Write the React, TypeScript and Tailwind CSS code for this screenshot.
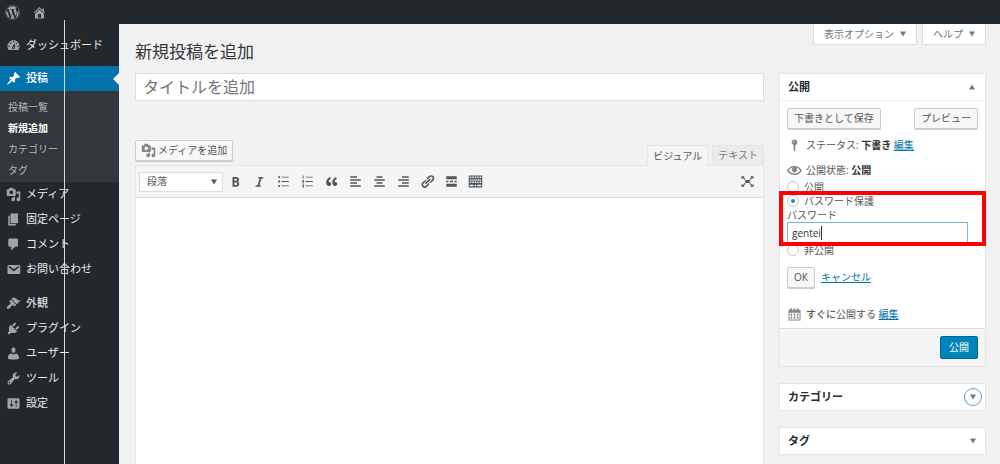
import { ReactNode } from 'react';
import { FaWordpress } from 'react-icons/fa';

const icons = {
  home: 'M16 8.5l1.53 1.53-1.06 1.06L10 4.6l-6.47 6.49-1.06-1.06L10 2.5l4 4v-2h2v4zm-6-2.46l6 5.99V18H4v-5.97zM12 17v-5H8v5h4z',
  dashboard:
    'M3.76 16h12.48c1.1-1.37 1.76-3.11 1.76-5 0-4.42-3.58-8-8-8s-8 3.58-8 8c0 1.89.66 3.63 1.76 5zM10 4c.55 0 1 .45 1 1s-.45 1-1 1-1-.45-1-1 .45-1 1-1zM6 6c.55 0 1 .45 1 1s-.45 1-1 1-1-.45-1-1 .45-1 1-1zm8 0c.55 0 1 .45 1 1s-.45 1-1 1-1-.45-1-1 .45-1 1-1zm-5.37 5.55L12 7v6c0 1.1-.9 2-2 2s-2-.9-2-2c0-.57.24-1.08.63-1.45zM4 10c.55 0 1 .45 1 1s-.45 1-1 1-1-.45-1-1 .45-1 1-1zm12 0c.55 0 1 .45 1 1s-.45 1-1 1-1-.45-1-1 .45-1 1-1zm-5 3c0-.55-.45-1-1-1s-1 .45-1 1 .45 1 1 1 1-.45 1-1z',
  post: 'M10.44 3.02l1.82-1.82 6.36 6.35-1.83 1.82c-1.05-.68-2.48-.57-3.41.36l-.75.75c-.92.93-1.04 2.35-.35 3.41l-1.83 1.82-2.41-2.41-2.8 2.79c-.42.42-3.38 2.71-3.8 2.29s1.86-3.39 2.28-3.81l2.79-2.79L4.1 9.36l1.83-1.82c1.05.69 2.48.57 3.4-.36l.75-.75c.93-.92 1.05-2.35.36-3.41z',
  media:
    'M13 11V4c0-.55-.45-1-1-1h-1.67L9 1H5L3.67 3H2c-.55 0-1 .45-1 1v7c0 .55.45 1 1 1h10c.55 0 1-.45 1-1zM7 4.5c1.38 0 2.5 1.12 2.5 2.5S8.38 9.5 7 9.5 4.5 8.38 4.5 7 5.62 4.5 7 4.5zM14 6h5v10.5c0 1.38-1.12 2.5-2.5 2.5S14 17.88 14 16.5s1.12-2.5 2.5-2.5c.17 0 .34.02.5.05V9h-3V6zm-4 8.05V13h2v3.5c0 1.38-1.12 2.5-2.5 2.5S7 17.88 7 16.5 8.12 14 9.5 14c.17 0 .34.02.5.05z',
  page: 'M6 15V2h10v13H6zm-1 1h8v2H3V5h2v11z',
  comments: 'M5 2h9c1.1 0 2 .9 2 2v7c0 1.1-.9 2-2 2h-2l-5 5v-5H5c-1.1 0-2-.9-2-2V4c0-1.1.9-2 2-2z',
  email:
    'M3.87 4h13.25C18.37 4 19 4.59 19 5.79v8.42c0 1.19-.63 1.79-1.88 1.79H3.87c-1.25 0-1.88-.6-1.88-1.79V5.79c0-1.2.63-1.79 1.88-1.79zm6.62 8.6l6.74-5.53c.24-.2.43-.66.13-1.07-.29-.41-.82-.42-1.17-.17l-5.7 3.86L4.8 5.83c-.35-.25-.88-.24-1.17.17-.3.41-.11.87.13 1.07z',
  appearance:
    'M14.48 11.06L7.41 3.99l1.5-1.5c.5-.56 2.3-.47 3.51.32 1.21.8 1.43 1.28 2.91 2.1 1.18.64 2.45 1.26 4.45.85zm-.71.71L6.7 4.7 4.93 6.47c-.39.39-.39 1.02 0 1.41l1.06 1.06c.39.39.39 1.03 0 1.42-.6.6-1.43 1.11-2.21 1.69-.35.26-.7.53-1.01.84C1.43 14.23.4 16.08 1.4 17.07c.99 1 2.84-.03 4.18-1.36.31-.31.58-.66.85-1.02.57-.78 1.08-1.61 1.69-2.21.39-.39 1.02-.39 1.41 0l1.06 1.06c.39.39 1.02.39 1.41 0z',
  plugins:
    'M13.11 4.36L9.87 7.6 8 5.73l3.24-3.24c.35-.34 1.05-.2 1.56.32.52.51.66 1.21.31 1.55zm-8 1.77l.91-1.12 9.01 9.01-1.19.84c-.71.71-2.63 1.16-3.82 1.16H6.14L4.9 17.26c-.59.59-1.54.59-2.12 0-.59-.58-.59-1.53 0-2.12l1.24-1.24v-3.88c0-1.13.4-3.19 1.09-3.89zm7.26 3.97l3.24-3.24c.34-.35 1.04-.21 1.55.31.52.51.66 1.21.31 1.55l-3.24 3.25z',
  users:
    'M10 9.25c-2.27 0-2.73-3.44-2.73-3.44C7 4.02 7.82 2 9.97 2c2.16 0 2.98 2.02 2.71 3.81 0 0-.41 3.44-2.68 3.44zm0 2.57L12.72 10c2.39 0 4.52 2.33 4.52 4.53v2.49s-3.65 1.13-7.24 1.13c-3.65 0-7.24-1.13-7.24-1.13v-2.49c0-2.25 1.94-4.48 4.47-4.48z',
  tools:
    'M16.68 9.77c-1.34 1.34-3.3 1.67-4.95.99l-5.41 6.52c-.99.99-2.59.99-3.58 0s-.99-2.59 0-3.57l6.52-5.42c-.68-1.65-.35-3.61.99-4.95 1.28-1.28 3.12-1.62 4.72-1.06l-2.89 2.89 2.82 2.82 2.86-2.87c.53 1.58.18 3.39-1.08 4.65zM3.81 16.21c.4.39 1.04.39 1.43 0 .4-.4.4-1.04 0-1.43-.39-.4-1.03-.4-1.43 0-.39.39-.39 1.03 0 1.43z',
  settings:
    'M18 16V4c0-.55-.45-1-1-1H3c-.55 0-1 .45-1 1v12c0 .55.45 1 1 1h14c.55 0 1-.45 1-1zM8 11h1c.55 0 1 .45 1 1s-.45 1-1 1H8v1.5c0 .28-.22.5-.5.5s-.5-.22-.5-.5V13H6c-.55 0-1-.45-1-1s.45-1 1-1h1V5.5c0-.28.22-.5.5-.5s.5.22.5.5V11zm5-2h-1c-.55 0-1-.45-1-1s.45-1 1-1h1V5.5c0-.28.22-.5.5-.5s.5.22.5.5V7h1c.55 0 1 .45 1 1s-.45 1-1 1h-1v5.5c0 .28-.22.5-.5.5s-.5-.22-.5-.5V9z',
  bold: 'M6 4v13h4.54c1.37 0 2.46-.33 3.26-1 .8-.66 1.2-1.58 1.2-2.77 0-.84-.17-1.51-.51-2.01s-.9-.85-1.67-1.03v-.09c.57-.1 1.02-.4 1.36-.9s.51-1.13.51-1.91c0-1.14-.39-1.98-1.17-2.5C12.75 4.26 11.5 4 9.78 4H6zm2.57 5.15V6.26h1.36c.73 0 1.27.11 1.61.32.34.22.51.58.51 1.07 0 .54-.16.92-.47 1.15s-.82.35-1.51.35h-1.5zm0 2.19h1.6c1.44 0 2.16.53 2.16 1.61 0 .6-.17 1.05-.51 1.34s-.86.43-1.57.43H8.57v-3.38z',
  italic: 'M14.78 6h-2.13l-2.8 9h2.12l-.62 2H4.6l.62-2h2.14l2.8-9H8.03l.62-2h6.75z',
  ul: 'M3 3h2.4v2.4H3zM3 8.8h2.4v2.4H3zM3 14.6h2.4V17H3zM7.5 3.6H17v1.2H7.5zM7.5 9.4H17v1.2H7.5zM7.5 15.2H17v1.2H7.5z',
  ol: 'M3.6 2h1.2v4H3.6zM2.8 8h2.6v1.8L4 11.4h1.4v.9H2.8v-1.2l1.5-1.7v-.5H2.8zM2.8 14h2.6v4H2.8v-.9h1.5v-.7h-1v-.8h1v-.7H2.8zM7.5 3.6H17v1.2H7.5zM7.5 9.4H17v1.2H7.5zM7.5 15.2H17v1.2H7.5z',
  quote:
    'M9.49 13.22c0-.74-.2-1.38-.61-1.9-.62-.78-1.83-.88-2.53-.72-.29-1.65 1.11-3.75 2.92-4.65L7.88 4c-2.73 1.3-5.42 4.28-4.96 8.05C3.21 14.43 4.59 16 6.54 16c.85 0 1.56-.25 2.12-.75s.83-1.18.83-2.03zm8.05 0c0-.74-.2-1.38-.61-1.9-.63-.78-1.83-.88-2.53-.72-.29-1.65 1.11-3.75 2.92-4.65L15.93 4c-2.73 1.3-5.41 4.28-4.95 8.05.29 2.38 1.66 3.95 3.61 3.95.85 0 1.56-.25 2.12-.75s.83-1.18.83-2.03z',
  alignLeft: 'M12 5V3H3v2h9zm5 4V7H3v2h14zm-5 4v-2H3v2h9zm5 4v-2H3v2h14z',
  alignCenter: 'M14 5V3H6v2h8zm3 4V7H3v2h14zm-3 4v-2H6v2h8zm3 4v-2H3v2h14z',
  alignRight: 'M17 5V3H8v2h9zm0 4V7H3v2h14zm0 4v-2H8v2h9zm0 4v-2H3v2h14z',
  link: 'M17.74 2.76c1.68 1.69 1.68 4.41 0 6.1l-1.53 1.52c-1.12 1.12-2.7 1.47-4.14 1.09l2.62-2.61.76-.77.76-.76c.84-.84.84-2.2 0-3.04-.84-.85-2.2-.85-3.04 0l-.77.76-3.38 3.38c-.37-1.44-.02-3.02 1.1-4.14l1.52-1.53c1.69-1.68 4.42-1.68 6.1 0zM8.59 13.43l5.34-5.34c.42-.42.42-1.1 0-1.52-.44-.43-1.13-.39-1.53 0l-5.33 5.34c-.42.42-.42 1.1 0 1.52.44.43 1.13.39 1.52 0zm-.76 2.29l4.14-4.15c.38 1.44.03 3.02-1.09 4.14l-1.52 1.53c-1.69 1.68-4.41 1.68-6.1 0-1.68-1.68-1.68-4.42 0-6.1l1.53-1.52c1.12-1.12 2.7-1.47 4.14-1.1l-4.14 4.15c-.85.84-.85 2.2 0 3.05.84.84 2.2.84 3.04 0z',
  more: 'M17 7V3H3v4h14zM6 11V9H3v2h3zm6 0V9H8v2h4zm5 0V9h-3v2h3zm0 6v-4H3v4h14z',
  kitchenSink:
    'M1 2h18v16H1zM2.4 3.4v2h2v-2zm3.3 0v2h2v-2zm3.3 0v2h2v-2zm3.3 0v2h2v-2zm3.3 0v2h2v-2zM2.4 7.4v1.2h15.2V7.4zM2.4 10v2h2v-2zm3.3 0v2h2v-2zm3.3 0v2h2v-2zm3.3 0v2h2v-2zm3.3 0v2h2v-2zM2.4 14.2v2h5v-2zm6.6 0v2h2v-2zm3.3 0v2h5.3v-2z',
  fullscreen:
    'M7 8h6v4H7zM2 3h4.2L4.9 4.3l2.6 2.6-1.1 1.1-2.6-2.6L2 7zM18 3v4l-1.8-1.6L13.6 8l-1.1-1.1 2.6-2.6L13.8 3zM2 17v-4l1.8 1.6L6.4 12l1.1 1.1-2.6 2.6L6.2 17zM18 17h-4.2l1.3-1.3-2.6-2.6 1.1-1.1 2.6 2.6L18 13z',
  pin: 'M10 2c2.1 0 3.8 1.7 3.8 3.8 0 1.6-1 3-2.4 3.5L10.800 17.500H9.200L8.600 9.300C7.200 8.800 6.200 7.400 6.200 5.800 6.200 3.700 7.900 2 10 2zM9.200 3.800c-.8.3-1.400 1-1.400 1.900h1c0-.6.4-1.100 1-1.300z',
  eye: 'M19.7 9.4C17.7 6 14 3.9 10 3.9S2.3 6 .3 9.4L0 10l.3.6c2 3.4 5.7 5.5 9.7 5.5s7.7-2.1 9.7-5.5l.3-.6-.3-.6zM10 14.1c-3.1 0-6-1.6-7.7-4.1C3.6 8 5.700 6.600 8 6.100c-.9.6-1.500 1.700-1.500 2.900 0 1.900 1.600 3.500 3.500 3.500s3.500-1.600 3.500-3.500c0-1.200-.6-2.300-1.500-2.900 2.300.5 4.400 1.900 5.700 3.900-1.700 2.500-4.600 4.100-7.700 4.100z',
  calendar:
    'M2 3.5h2.500v-2h2v2h2.500v-2h2v2h2.500v-2h2v2H18V18H2zM3.300 7.500v9.200h13.400V7.500zM4.800 8.500h2v3.200h-2zM9 8.500h2v3.200H9zM13.200 8.500h2v3.200h-2zM4.800 12.500h2v3.200h-2zM9 12.500h2v3.200H9zM13.200 12.500h2v3.200h-2z',
};

type IconName = keyof typeof icons;

const Icon = ({ name }: { name: IconName }) => (
  <svg viewBox="0 0 20 20" fill="currentColor" fillRule="evenodd" aria-hidden="true" className="size-[15px] shrink-0">
    <path d={icons[name]} />
  </svg>
);

const Triangle = ({ up = false }: { up?: boolean }) => (
  <svg viewBox="0 0 6 6" fill="currentColor" aria-hidden="true" className="size-1.5 shrink-0">
    <path d={up ? 'M0 5.5L3 .5l3 5z' : 'M0 .5l3 5 3-5z'} />
  </svg>
);

const mainMenu: { icon: IconName; label: string }[] = [
  { icon: 'media', label: 'メディア' },
  { icon: 'page', label: '固定ページ' },
  { icon: 'comments', label: 'コメント' },
  { icon: 'email', label: 'お問い合わせ' },
];

const adminMenu: { icon: IconName; label: string }[] = [
  { icon: 'appearance', label: '外観' },
  { icon: 'plugins', label: 'プラグイン' },
  { icon: 'users', label: 'ユーザー' },
  { icon: 'tools', label: 'ツール' },
  { icon: 'settings', label: '設定' },
];

const postMenu = ['投稿一覧', '新規追加', 'カテゴリー', 'タグ'];

const toolbar: { icon: IconName; label: string }[] = [
  { icon: 'bold', label: '太字' },
  { icon: 'italic', label: 'イタリック' },
  { icon: 'ul', label: '番号なしリスト' },
  { icon: 'ol', label: '番号付きリスト' },
  { icon: 'quote', label: '引用' },
  { icon: 'alignLeft', label: '左寄せ' },
  { icon: 'alignCenter', label: '中央揃え' },
  { icon: 'alignRight', label: '右寄せ' },
  { icon: 'link', label: 'リンクの挿入' },
  { icon: 'more', label: '続きを読む' },
  { icon: 'kitchenSink', label: 'ツールバー切り替え' },
];

const MenuItem = ({ icon, label }: { icon: IconName; label: string }) => (
  <a href="#" className="flex h-[25px] items-center gap-[5px] pl-1.5 text-[11px] text-[#eeeeee]">
    <span className="text-[#a0a5aa]">
      <Icon name={icon} />
    </span>
    {label}
  </a>
);

const Sidebar = () => (
  <nav className="w-[119px] shrink-0 bg-[#23282d] pt-[9px]">
    <MenuItem icon="dashboard" label="ダッシュボード" />
    <div className="mt-2">
      <a href="#" className="relative flex h-[25px] items-center gap-[5px] bg-[#0073aa] pl-1.5 text-[11px] font-medium text-white">
        <Icon name="post" />
        投稿
        <svg viewBox="0 0 6 12" className="absolute right-0 h-3 w-1.5" aria-hidden="true">
          <path d="M6 0L0 6l6 6z" fill="#f1f1f1" />
        </svg>
      </a>
      <ul className="bg-[#32373c] pt-1.5 pb-px">
        {postMenu.map((label) => (
          <li key={label}>
            <a
              href="#"
              className={`block pl-2 text-[10px] leading-[21px] ${label === '新規追加' ? 'font-bold text-white' : 'text-[#b4b9be]'}`}
            >
              {label}
            </a>
          </li>
        ))}
      </ul>
    </div>
    {mainMenu.map((item) => (
      <MenuItem key={item.label} {...item} />
    ))}
    <div className="mt-[9px]">
      {adminMenu.map((item) => (
        <MenuItem key={item.label} {...item} />
      ))}
    </div>
  </nav>
);

const Button = ({ children }: { children: ReactNode }) => (
  <button
    type="button"
    className="flex h-[21px] items-center gap-1 rounded-xs border border-[#cccccc] bg-[#f7f7f7] px-1.5 text-[#555555] shadow-[0_1px_0_#cccccc]"
  >
    {children}
  </button>
);

const Editor = () => (
  <div className="flex min-w-0 flex-1 flex-col pt-[18px]">
    <h1 className="text-[17px] leading-5 text-[#32373c]">新規投稿を追加</h1>
    <input
      type="text"
      aria-label="タイトルを追加"
      placeholder="タイトルを追加"
      className="mt-[11px] h-7 w-full border border-[#dddddd] bg-white px-[7px] text-[16px] placeholder:text-[#72777c]"
    />
    <div className="mt-[39px] flex h-[25px] items-start justify-between">
      <button
        type="button"
        className="flex h-[21px] items-center gap-0.5 rounded-xs border border-[#cccccc] bg-[#f7f7f7] px-[5px] text-[#555555] shadow-[0_1px_0_#cccccc]"
      >
        <span className="text-[#82878c]">
          <Icon name="media" />
        </span>
        メディアを追加
      </button>
      <div className="flex gap-1 self-end">
        <button type="button" className="relative -mb-px h-[21px] border border-b-0 border-[#e5e5e5] bg-[#f5f5f5] px-[5px] text-[#555555]">
          ビジュアル
        </button>
        <button type="button" className="h-5 border border-b-0 border-[#e5e5e5] bg-[#ebebeb] px-[5px] text-[#777777]">
          テキスト
        </button>
      </div>
    </div>
    <div className="flex flex-1 flex-col border border-b-0 border-[#e5e5e5] bg-white">
      <div className="flex h-8 items-center border-b border-[#dddddd] bg-[#f5f5f5] pr-2 pl-[3px] text-[#50575e]">
        <div className="relative flex items-center">
          <select aria-label="段落の書式" className="h-5 w-[84px] appearance-none border border-[#dddddd] bg-white px-[7px] text-[10px]">
            <option>段落</option>
          </select>
          <span className="pointer-events-none absolute right-1.5">
            <Triangle />
          </span>
        </div>
        {toolbar.map(({ icon, label }) => (
          <button key={icon} type="button" aria-label={label} className="flex w-6 justify-center">
            <Icon name={icon} />
          </button>
        ))}
        <button type="button" aria-label="集中執筆モード" className="ml-auto">
          <Icon name="fullscreen" />
        </button>
      </div>
      <textarea aria-label="本文" className="w-full flex-1 resize-none bg-white p-3 outline-none" />
    </div>
  </div>
);

const Radio = ({ label, checked = false }: { label: string; checked?: boolean }) => (
  <label className="flex h-[14px] items-center gap-[5px]">
    <input
      type="radio"
      name="visibility"
      defaultChecked={checked}
      className="flex size-3 appearance-none items-center justify-center rounded-full border border-[#c4c8cc] bg-white checked:before:size-1 checked:before:rounded-full checked:before:bg-[#1e8cbe]"
    />
    {label}
  </label>
);

const Link = ({ children }: { children: ReactNode }) => (
  <a href="#" className="text-[#0073aa] underline">
    {children}
  </a>
);

const PublishBox = () => (
  <section className="border border-[#e5e5e5] bg-white">
    <div className="flex h-[27px] items-center justify-between border-b border-[#eeeeee] pr-2.5 pl-2 text-[#72777c]">
      <h2 className="text-[11px] font-bold text-[#23282d]">公開</h2>
      <Triangle up />
    </div>
    <div className="px-[7px] pt-[7px]">
      <div className="flex justify-between">
        <Button>下書きとして保存</Button>
        <Button>プレビュー</Button>
      </div>
      <div className="mt-2 flex h-4 items-center gap-1">
        <span className="text-[#82878c]">
          <Icon name="pin" />
        </span>
        <p>
          ステータス: <b className="text-[#333333]">下書き</b> <Link>編集</Link>
        </p>
      </div>
      <div className="mt-[9px] flex h-4 items-center gap-1">
        <span className="text-[#82878c]">
          <Icon name="eye" />
        </span>
        <p>
          公開状態: <b className="text-[#333333]">公開</b>
        </p>
      </div>
      <div className="mt-0.5">
        <Radio label="公開" />
        <div className="relative">
          <Radio label="パスワード保護" checked />
          <label htmlFor="post-password" className="block leading-[14px]">
            パスワード
          </label>
          <div className="relative mr-2.5 flex items-center">
            <input
              id="post-password"
              type="text"
              defaultValue="gentei"
              className="h-[21px] w-full border border-[#7ab5e6] bg-white px-1 text-[10px] text-[#32373c] outline-none"
            />
            <span className="absolute left-[34px] h-3.5 w-px bg-[#32373c]" />
          </div>
          {/* Highlight around the password fields */}
          <div className="pointer-events-none absolute -inset-x-2 -inset-y-[3px] border-4 border-[#ff0000]" />
        </div>
        <Radio label="非公開" />
      </div>
      <div className="mt-2.5 flex items-center gap-1.5">
        <Button>OK</Button>
        <Link>キャンセル</Link>
      </div>
      <div className="mt-[18px] flex h-4 items-center gap-1">
        <span className="text-[#82878c]">
          <Icon name="calendar" />
        </span>
        <p>
          <b className="font-medium">すぐに</b>公開する <Link>編集</Link>
        </p>
      </div>
    </div>
    <div className="mt-1.5 flex h-[38px] items-center justify-end border-t border-[#dddddd] bg-[#f5f5f5] px-[7px]">
      <button type="button" className="h-[23px] rounded-xs border border-[#006799] bg-[#0085ba] px-2 text-white">
        公開
      </button>
    </div>
  </section>
);

const ClosedBox = ({ title, focused = false }: { title: string; focused?: boolean }) => (
  <section className="mt-4 flex h-7 items-center justify-between border border-[#e5e5e5] bg-white pr-1 pl-2">
    <h2 className="text-[11px] font-bold text-[#23282d]">{title}</h2>
    <button
      type="button"
      aria-label={`${title}を開く`}
      className={`flex size-4 items-center justify-center rounded-full text-[#72777c] ${focused ? 'ring-1 ring-[#5b9dd9]' : ''}`}
    >
      <Triangle />
    </button>
  </section>
);

const App = () => {
  return (
    <div className="relative flex min-h-screen flex-col bg-[#f1f1f1] font-['Open_Sans','Noto_Sans_CJK_JP',sans-serif] text-[10px] text-[#555555]">
      <header className="flex h-6 shrink-0 items-center gap-3 bg-[#23282d] pl-[5px] text-[#a0a5aa]">
        <a href="#" aria-label="WordPress">
          <FaWordpress className="size-[15px]" />
        </a>
        <a href="#" aria-label="サイトを表示">
          <Icon name="home" />
        </a>
      </header>
      <div className="flex flex-1">
        <Sidebar />
        <main className="flex flex-1 gap-[15px] pr-[14px] pl-4">
          <Editor />
          <aside className="w-[207px] shrink-0">
            <div className="mb-7 flex h-[21px] justify-end gap-[5px]">
              <button type="button" className="flex items-center gap-1.5 border border-t-0 border-[#dddddd] bg-white px-2.5 text-[#72777c]">
                表示オプション <Triangle />
              </button>
              <button type="button" className="flex items-center gap-1.5 border border-t-0 border-[#dddddd] bg-white px-2.5 text-[#72777c]">
                ヘルプ <Triangle />
              </button>
            </div>
            <PublishBox />
            <ClosedBox title="カテゴリー" focused />
            <ClosedBox title="タグ" />
          </aside>
        </main>
      </div>
      <div className="pointer-events-none absolute top-5 bottom-0 left-16 w-px bg-[#d5d7d9]" />
    </div>
  );
};

export default App;
